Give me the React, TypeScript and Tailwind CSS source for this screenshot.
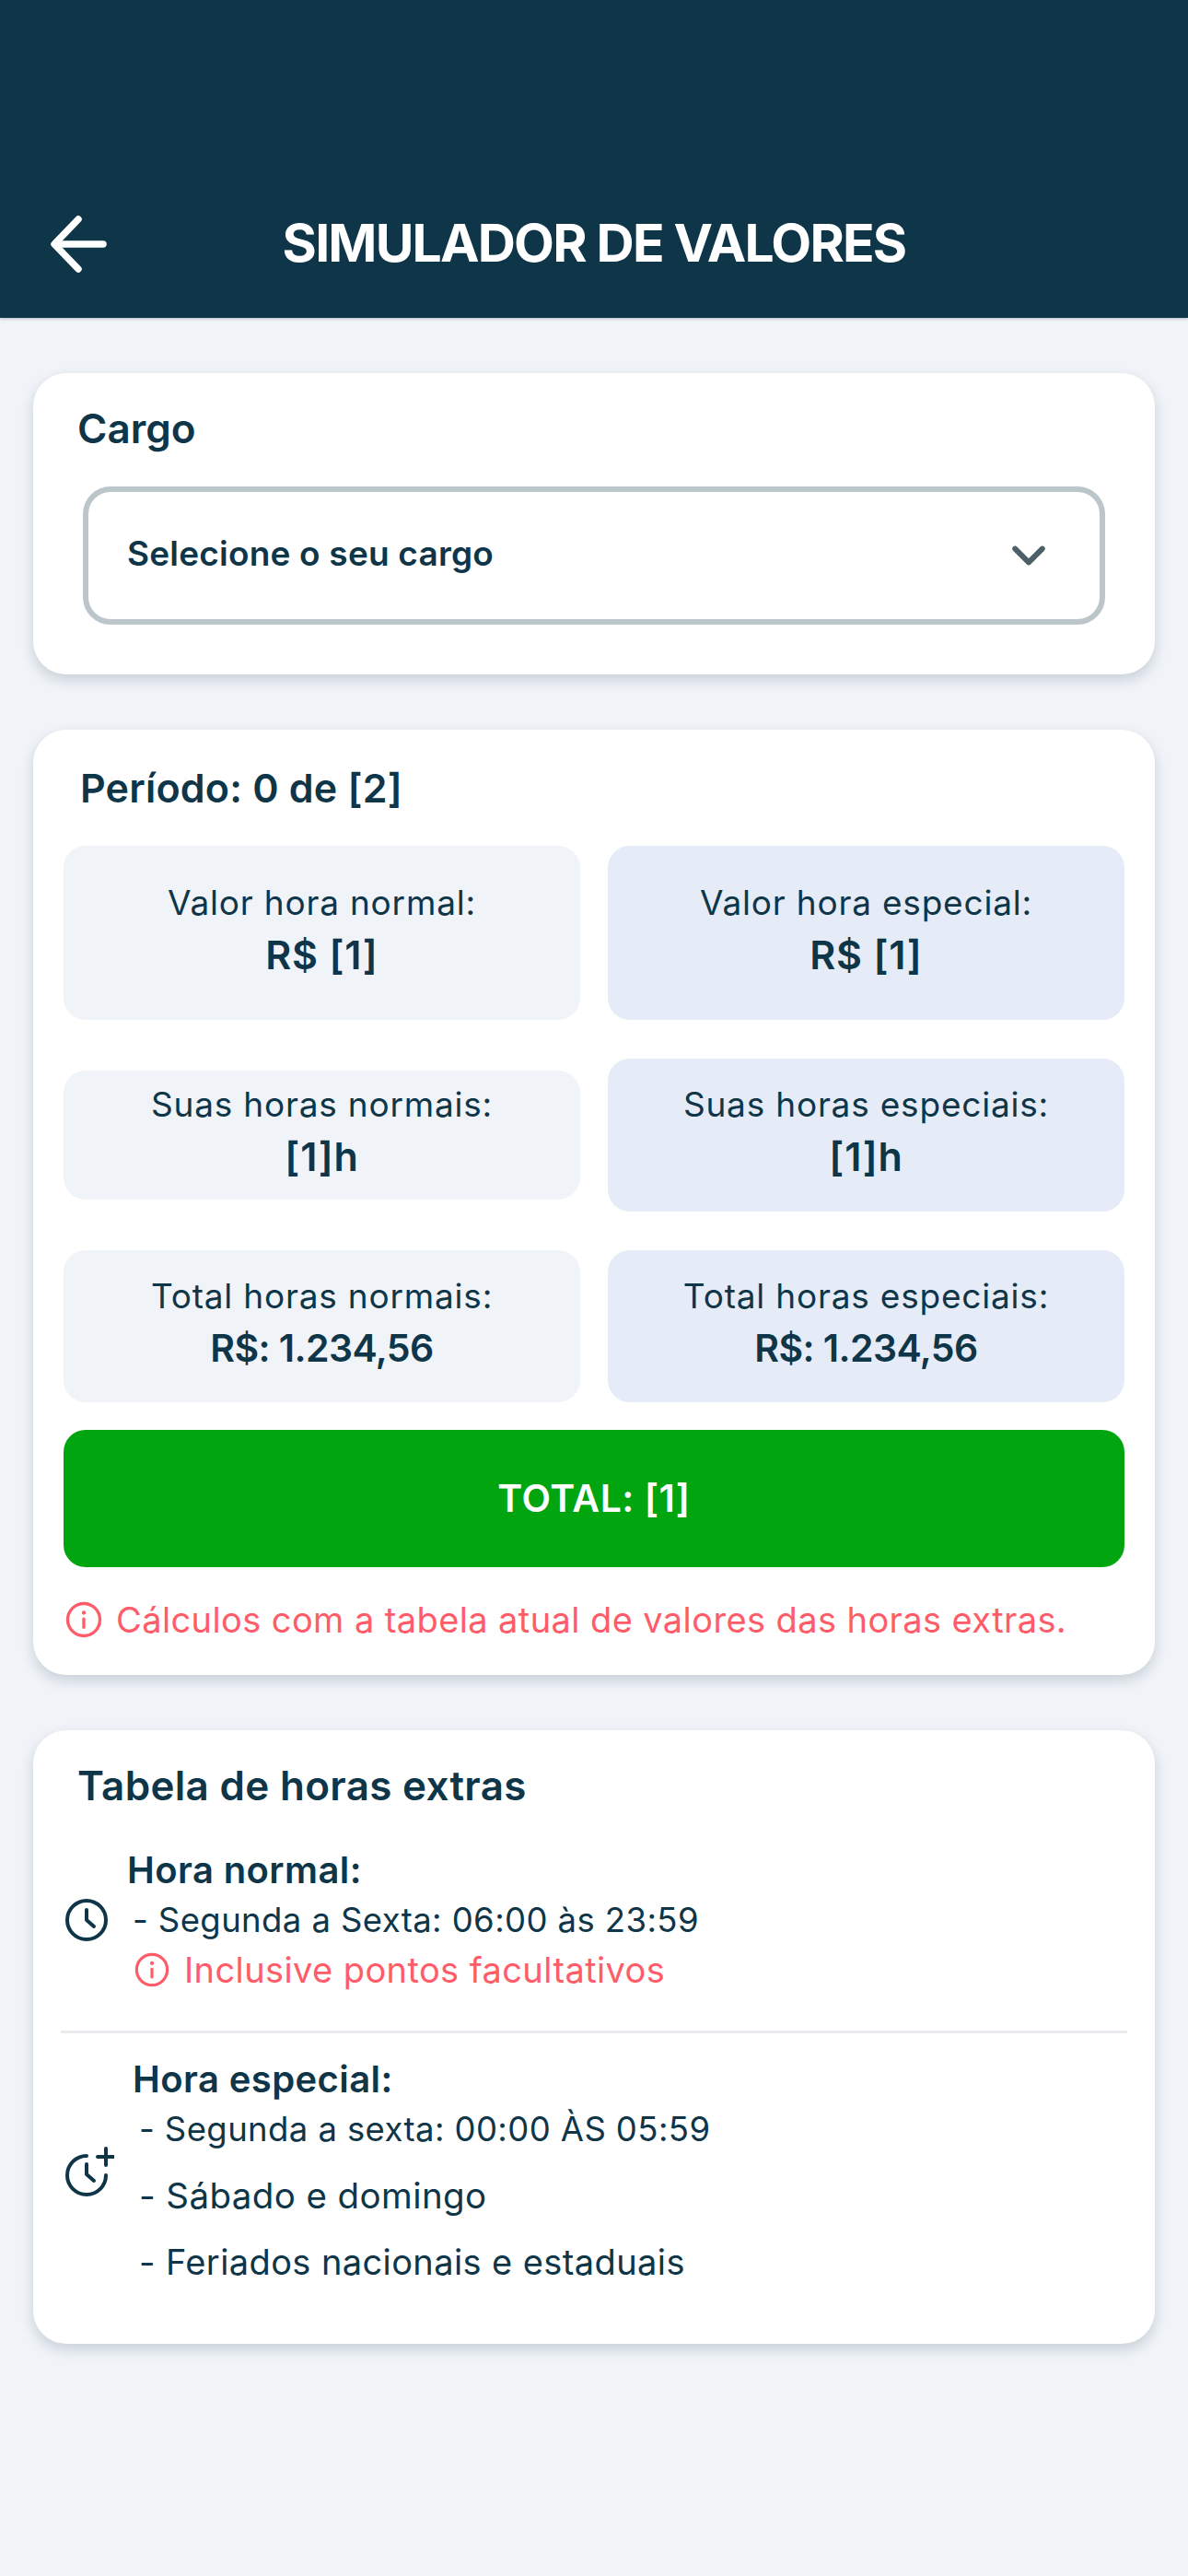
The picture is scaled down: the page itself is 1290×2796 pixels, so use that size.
import React from "react";

const font = { fontFamily: "Inter, 'Noto Sans', sans-serif" };

function Info({ size }: { size: number }) {
  return (
    <svg width={size} height={size} viewBox="0 0 24 24" fill="none" stroke="#ff5c69" strokeWidth="2" strokeLinecap="round" className="shrink-0">
      <circle cx="12" cy="12" r="10.5" />
      <path d="M12 11.5v5.5" />
      <path d="M12 7.4v.1" strokeWidth="2.6" />
    </svg>
  );
}

function Box({ label, value, blue, amount, cls }: { label: string; value: string; blue?: boolean; amount?: boolean; cls: string }) {
  return (
    <div className={`flex flex-col items-center justify-center rounded-[24px] pb-[6px] text-[#0f3549] ${blue ? "bg-[#e5ecf7]" : "bg-[#f0f3f8]"} ${cls}`}>
      <div className="text-[37px] leading-[48px] tracking-[0.8px]">{label}</div>
      <div className={amount ? "mt-[4px] text-[41px] leading-[56px] font-semibold tracking-[-0.6px]" : "mt-[4px] text-[43px] leading-[56px] font-semibold tracking-[0.8px]"}>{value}</div>
    </div>
  );
}

export default function App() {
  return (
    <div className="min-h-[2796px] w-[1290px] bg-[#f0f3f8] text-[#0f3549]" style={font}>
      <header className="relative flex h-[345px] items-end bg-[#0f3549] pb-[47px] shadow-[0_1px_3px_rgba(0,0,0,0.25)]">
        <div className="pl-[55px]">
          <svg width="62" height="66" viewBox="0 0 62 66" fill="none" stroke="#fff" strokeWidth="7.5" strokeLinecap="round" strokeLinejoin="round" className="block">
            <path d="M57 33H5" />
            <path d="M30 6 4 33l26 27" />
          </svg>
        </div>
        <h1 className="absolute right-0 bottom-[48px] left-0 text-center text-[57px] leading-[66px] font-bold tracking-[-1.8px] text-white">SIMULADOR DE VALORES</h1>
      </header>

      <main className="flex flex-col gap-[60px] px-[36px] pt-[60px]">
        <section className="h-[327px] rounded-[36px] bg-white pt-[32px] pr-[54px] pl-[48px] shadow-[0_6px_14px_rgba(15,53,73,0.18)]">
          <h2 className="text-[44px] leading-[56px] font-semibold">Cargo</h2>
          <div className="mt-[35px] ml-[6px] flex h-[150px] items-center justify-between rounded-[30px] border-[6px] border-[#bcc5ca] bg-white pr-[58px] pl-[42px]">
            <span className="pb-[5px] text-[37px] font-semibold tracking-[0.2px]">Selecione o seu cargo</span>
            <svg width="38" height="24" viewBox="0 0 40 26" fill="none" stroke="#4d5f69" strokeWidth="6.5" strokeLinecap="round" strokeLinejoin="round">
              <path d="M4 5l16 16L36 5" />
            </svg>
          </div>
        </section>

        <section className="h-[1026px] rounded-[36px] bg-white px-[33px] pt-[35px] shadow-[0_6px_14px_rgba(15,53,73,0.18)]">
          <h2 className="ml-[18px] text-[43px] leading-[56px] font-semibold tracking-[0.2px]">Período: 0 de [2]</h2>
          <div className="mt-[35px] flex flex-col gap-[42px]">
            <div className="grid grid-cols-2 items-center gap-[30px]">
              <Box label="Valor hora normal:" value="R$ [1]" cls="h-[189px]" />
              <Box label="Valor hora especial:" value="R$ [1]" blue cls="h-[189px]" />
            </div>
            <div className="grid grid-cols-2 items-center gap-[30px]">
              <Box label="Suas horas normais:" value="[1]h" cls="h-[140px]" />
              <Box label="Suas horas especiais:" value="[1]h" blue cls="h-[166px]" />
            </div>
            <div className="grid grid-cols-2 items-center gap-[30px]">
              <Box label="Total horas normais:" value="R$: 1.234,56" amount cls="h-[165px]" />
              <Box label="Total horas especiais:" value="R$: 1.234,56" amount blue cls="h-[165px]" />
            </div>
          </div>
          <div className="mt-[30px] flex h-[149px] items-center justify-center rounded-[24px] bg-[#00a510] text-[41px] font-semibold tracking-[0.5px] text-white">TOTAL: [1]</div>
          <div className="mt-[31px] ml-[2px] flex items-center gap-[15px] text-[#ff5c69]">
            <Info size={40} />
            <span className="text-[38px] leading-[52px] tracking-[0.4px] whitespace-nowrap">Cálculos com a tabela atual de valores das horas extras.</span>
          </div>
        </section>

        <section className="h-[666px] rounded-[36px] bg-white px-[30px] pt-[32px] shadow-[0_6px_14px_rgba(15,53,73,0.18)]">
          <h2 className="ml-[18px] text-[44px] leading-[56px] font-semibold tracking-[0.3px]">Tabela de horas extras</h2>
          <div className="mt-[38px] flex items-center">
            <svg width="48" height="48" viewBox="0 0 24 24" fill="none" stroke="#0f3549" strokeWidth="2" strokeLinecap="round" strokeLinejoin="round" className="ml-[4px] shrink-0">
              <circle cx="12" cy="12" r="10.5" />
              <path d="M12 6.5V12l4 3.5" />
            </svg>
            <div className="ml-[20px]">
              <div className="text-[40px] leading-[52px] font-semibold tracking-[0.4px]">Hora normal:</div>
              <div className="ml-[6px] text-[36.5px] leading-[56px] tracking-[0.4px]">- Segunda a Sexta: 06:00 às 23:59</div>
              <div className="ml-[8px] flex items-center gap-[16px] text-[#ff5c69]">
                <Info size={38} />
                <span className="text-[38px] leading-[52px] tracking-[0.4px]">Inclusive pontos facultativos</span>
              </div>
            </div>
          </div>
          <div className="mt-[40px] h-[3px] bg-[#e9ebee]" />
          <div className="mt-[24px] flex items-center">
            <svg width="54" height="54" viewBox="0 0 27 27" fill="none" stroke="#0f3549" strokeWidth="2" strokeLinecap="round" strokeLinejoin="round" className="ml-[4px] shrink-0">
              <path d="M12 5a10.5 10.5 0 1 0 10.5 10.5" />
              <path d="M12 9.5V15l4 3.5" />
              <path d="M22.5 1v9M18 5.5h9" />
            </svg>
            <div className="ml-[20px]">
              <div className="text-[40px] leading-[52px] font-semibold tracking-[0.4px]">Hora especial:</div>
              <div className="ml-[7px] flex flex-col tracking-[0.4px]">
                <div className="text-[36.5px] leading-[56px]">- Segunda a sexta: 00:00 ÀS 05:59</div>
                <div className="mt-[16px] text-[38.5px] leading-[56px]">- Sábado e domingo</div>
                <div className="mt-[16px] text-[38px] leading-[56px]">- Feriados nacionais e estaduais</div>
              </div>
            </div>
          </div>
        </section>
      </main>
    </div>
  );
}
